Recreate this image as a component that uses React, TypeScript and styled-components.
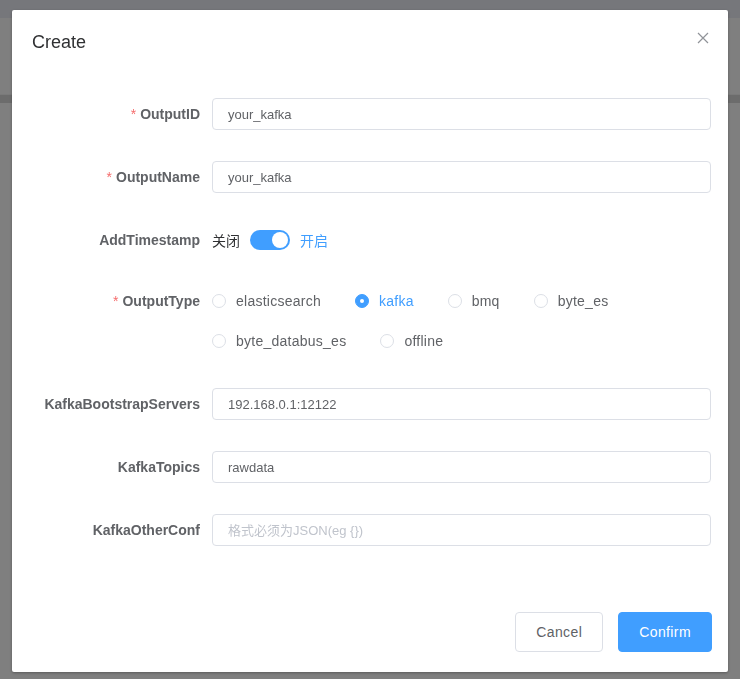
import React from "react";
import styled, { createGlobalStyle } from "styled-components";

const Global = createGlobalStyle`
  html, body { margin: 0; padding: 0; }
  body {
    font-family: "Liberation Sans", "Noto Sans CJK SC", sans-serif;
    background: #ffffff;
    width: 740px;
    height: 679px;
    overflow: hidden;
  }
  * { box-sizing: border-box; }
`;

const Page = styled.div`
  display: flex;
  flex-direction: column;
  height: 679px;
  background: #ffffff;
`;

const TopBar = styled.div`
  height: 18px;
  background: #eceef6;
`;

const PageSpacer = styled.div`
  height: 77px;
  border-bottom: 1px solid #f4f4f4;
`;

const Band = styled.div`
  height: 8px;
  background: #d9d9d9;
`;

const Overlay = styled.div`
  position: fixed;
  inset: 0;
  background: rgba(0, 0, 0, 0.5);
  overflow: hidden;
`;

const Dialog = styled.div`
  margin: 10px 0 0 12px;
  width: 716px;
  background: #ffffff;
  border-radius: 2px;
  box-shadow: 0 1px 3px rgba(0, 0, 0, 0.3);
`;

const Header = styled.div`
  display: flex;
  justify-content: space-between;
  align-items: flex-start;
  padding: 20px 19px 10px 20px;
`;

const Title = styled.span`
  font-size: 18px;
  line-height: 24px;
  color: #303133;
`;

const CloseButton = styled.button`
  border: 0;
  background: transparent;
  padding: 0;
  margin-top: 2px;
  width: 12px;
  height: 12px;
  display: flex;
  cursor: pointer;
`;

const Body = styled.div`
  padding: 30px 17px 30px 20px;
`;

const FormItem = styled.div<{ $mb?: number }>`
  display: flex;
  margin-bottom: ${(p) => (p.$mb ?? 23)}px;
`;

const Label = styled.label`
  width: 180px;
  flex-shrink: 0;
  padding-right: 12px;
  text-align: right;
  line-height: 40px;
  font-size: 14px;
  font-weight: 700;
  color: #606266;
`;

const Star = styled.span`
  color: #f56c6c;
  font-weight: 400;
  margin-right: 4px;
`;

const Content = styled.div<{ $wrap?: boolean }>`
  flex: 1;
  min-height: 40px;
  display: flex;
  align-items: center;
  flex-wrap: ${(p) => (p.$wrap ? "wrap" : "nowrap")};
  column-gap: ${(p) => (p.$wrap ? "34px" : "0")};
`;

const TextInput = styled.input`
  width: 100%;
  height: 32px;
  border: 1px solid #dcdfe6;
  border-radius: 4px;
  padding: 0 15px;
  font-family: "Liberation Sans", "Noto Sans CJK SC", sans-serif;
  font-size: 13px;
  color: #606266;
  background: #fff;
  outline: none;
  &::placeholder {
    color: #c0c4cc;
  }
`;

const SwitchText = styled.span<{ $active?: boolean }>`
  font-size: 14px;
  color: ${(p) => (p.$active ? "#409eff" : "#303133")};
`;

const SwitchTrack = styled.span<{ $on?: boolean }>`
  width: 40px;
  height: 20px;
  border-radius: 10px;
  margin: 0 10px;
  padding: 2px;
  display: flex;
  justify-content: ${(p) => (p.$on ? "flex-end" : "flex-start")};
  background: ${(p) => (p.$on ? "#409eff" : "#dcdfe6")};
`;

const SwitchKnob = styled.span`
  width: 16px;
  height: 16px;
  border-radius: 50%;
  background: #fff;
`;

const RadioItem = styled.label<{ $checked?: boolean }>`
  height: 40px;
  display: flex;
  align-items: center;
  font-size: 14px;
  letter-spacing: 0.25px;
  color: ${(p) => (p.$checked ? "#409eff" : "#606266")};
`;

const RadioCircle = styled.span<{ $checked?: boolean }>`
  width: 14px;
  height: 14px;
  border-radius: 50%;
  margin-right: 10px;
  display: flex;
  align-items: center;
  justify-content: center;
  border: 1px solid ${(p) => (p.$checked ? "#409eff" : "#dcdfe6")};
  background: ${(p) => (p.$checked ? "#409eff" : "#fff")};
  &::after {
    content: "";
    width: 4px;
    height: 4px;
    border-radius: 50%;
    background: #fff;
    display: ${(p) => (p.$checked ? "block" : "none")};
  }
`;

const Footer = styled.div`
  display: flex;
  justify-content: flex-end;
  gap: 15px;
  padding: 10px 16px 20px 20px;
`;

const Button = styled.button<{ $primary?: boolean }>`
  height: 40px;
  padding: 0 20px;
  border-radius: 4px;
  font-family: "Liberation Sans", "Noto Sans CJK SC", sans-serif;
  font-size: 14px;
  letter-spacing: 0.4px;
  cursor: pointer;
  border: 1px solid ${(p) => (p.$primary ? "#409eff" : "#dcdfe6")};
  background: ${(p) => (p.$primary ? "#409eff" : "#fff")};
  color: ${(p) => (p.$primary ? "#fff" : "#606266")};
`;

const types = ["elasticsearch", "kafka", "bmq", "byte_es", "byte_databus_es", "offline"];

type Field = { label: string; required?: boolean; value?: string; placeholder?: string };

const TextField = ({ label, required, value, placeholder, mb }: Field & { mb?: number }) => (
  <FormItem $mb={mb}>
    <Label>
      {required && <Star>*</Star>}
      {label}
    </Label>
    <Content>
      <TextInput readOnly value={value ?? ""} placeholder={placeholder} />
    </Content>
  </FormItem>
);

export default function App() {
  return (
    <>
      <Global />
      <Page>
        <TopBar />
        <PageSpacer />
        <Band />
      </Page>
      <Overlay>
        <Dialog>
          <Header>
            <Title>Create</Title>
            <CloseButton aria-label="close">
              <svg width="12" height="12" viewBox="0 0 12 12">
                <path d="M1 1 L11 11 M11 1 L1 11" stroke="#909399" strokeWidth="1.2" fill="none" />
              </svg>
            </CloseButton>
          </Header>
          <Body>
            <TextField label="OutputID" required value="your_kafka" />
            <TextField label="OutputName" required value="your_kafka" />
            <FormItem $mb={21}>
              <Label>AddTimestamp</Label>
              <Content>
                <SwitchText>关闭</SwitchText>
                <SwitchTrack $on>
                  <SwitchKnob />
                </SwitchTrack>
                <SwitchText $active>开启</SwitchText>
              </Content>
            </FormItem>
            <FormItem>
              <Label>
                <Star>*</Star>OutputType
              </Label>
              <Content $wrap>
                {types.map((t) => (
                  <RadioItem key={t} $checked={t === "kafka"}>
                    <RadioCircle $checked={t === "kafka"} />
                    {t}
                  </RadioItem>
                ))}
              </Content>
            </FormItem>
            <TextField label="KafkaBootstrapServers" value="192.168.0.1:12122" />
            <TextField label="KafkaTopics" value="rawdata" />
            <TextField label="KafkaOtherConf" placeholder="格式必须为JSON(eg {})" mb={22} />
          </Body>
          <Footer>
            <Button>Cancel</Button>
            <Button $primary>Confirm</Button>
          </Footer>
        </Dialog>
      </Overlay>
    </>
  );
}
